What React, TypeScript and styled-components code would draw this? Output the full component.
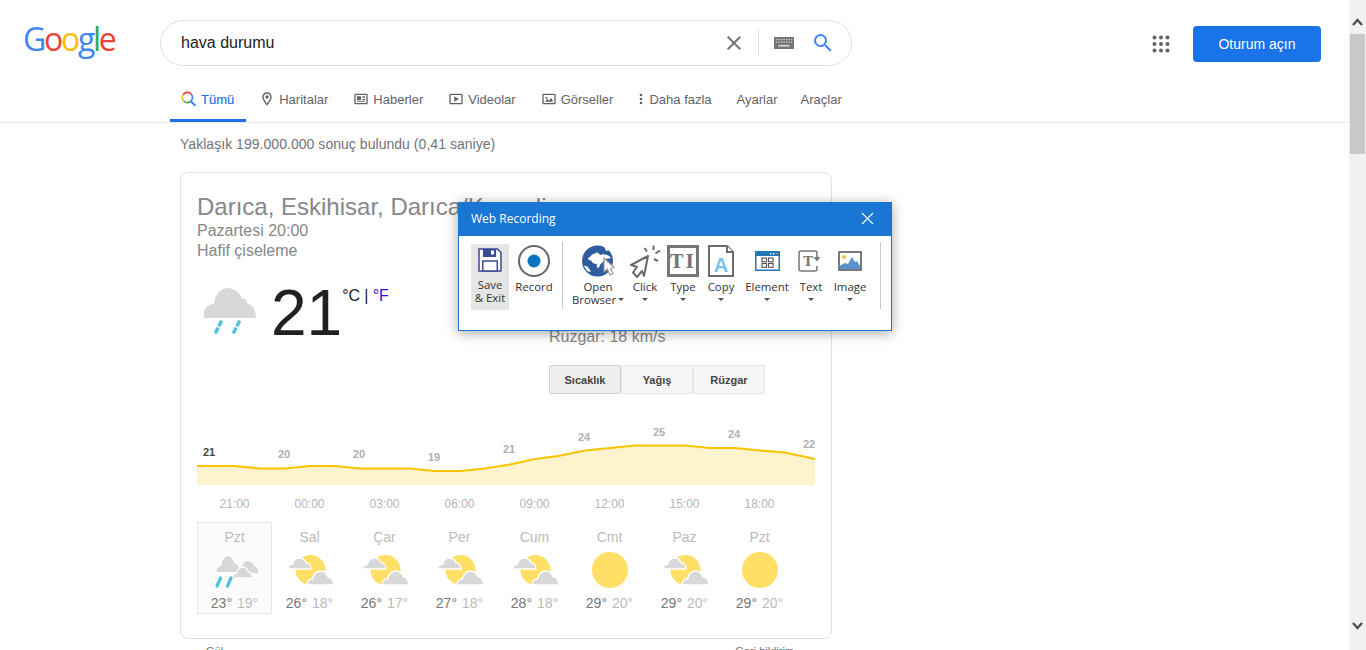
import React from "react";
import styled, { createGlobalStyle } from "styled-components";

const Global = createGlobalStyle`
  html, body { margin: 0; padding: 0; height: 650px; overflow: hidden; background: #fff; }
  body { font-family: "Liberation Sans", Arial, sans-serif; }
  * { box-sizing: border-box; }
`;

const Screen = styled.div`
  position: relative;
  display: flex;
  width: 1366px;
  height: 650px;
  overflow: hidden;
  background: #fff;
`;
const Main = styled.main`
  flex: 0 0 1349px;
  height: 650px;
  overflow: hidden;
`;
const Scrollbar = styled.aside`
  flex: 0 0 17px;
  height: 650px;
  background: #f1f1f1;
  display: flex;
  flex-direction: column;
  align-items: center;
  padding: 17px 1px 15px;
`;
const ScrollArrow = styled.div`
  height: 17px;
  width: 15px;
  display: flex;
  justify-content: center;
  align-items: ${(p: { $end?: boolean }) => (p.$end ? "center" : "flex-start")};
  color: #505050;
`;
const ScrollThumb = styled.div`
  width: 15px;
  height: 120px;
  background: #c8c8c8;
  margin-bottom: auto;
`;

const Header = styled.header`
  height: 86px;
  display: flex;
  align-items: flex-start;
  position: relative;
`;
const Logo = styled.div`
  width: 160px;
  padding: 16px 0 0 23px;
  font-family: "Open Sans", sans-serif;
  font-size: 32px;
  line-height: 46px;
  letter-spacing: -2.3px;
  font-weight: 400;
`;
const LogoLetter = styled.span<{ $c: string }>`
  color: ${(p) => p.$c};
`;
const SearchBox = styled.div`
  margin-top: 20px;
  width: 692px;
  height: 46px;
  border: 1px solid #dfe1e5;
  border-radius: 23px;
  display: flex;
  align-items: center;
  padding: 0 16px 0 20px;
`;
const SearchText = styled.div`
  flex: 1;
  font-size: 16px;
  color: #222;
`;
const SearchDivider = styled.div`
  width: 1px;
  height: 28px;
  background: #dfe1e5;
  margin: 0 13px 0 12px;
`;
const KeyboardWrap = styled.div`
  width: 24px;
  height: 24px;
  margin-right: 15px;
  display: flex;
  align-items: center;
  justify-content: center;
`;
const HeaderRight = styled.div`
  margin-left: auto;
  display: flex;
  align-items: center;
  gap: 20px;
  padding: 26px 28px 0 0;
`;
const SignIn = styled.button`
  width: 128px;
  height: 36px;
  border: 0;
  padding: 0 0 1px;
  border-radius: 4px;
  background: #1a73e8;
  color: #fff;
  font: 400 14px "Liberation Sans", Arial, sans-serif;
`;

const Nav = styled.nav`
  height: 37px;
  border-bottom: 1px solid #ebebeb;
  padding-left: 170px;
  display: flex;
`;
const Tab = styled.div<{ $active?: boolean; $pad?: number; $gap?: number }>`
  display: flex;
  align-items: center;
  gap: ${(p) => p.$gap ?? 4}px;
  height: 36px;
  padding: 0 12px 7px ${(p) => p.$pad ?? 12}px;
  margin-right: 1px;
  font-size: 13px;
  color: ${(p) => (p.$active ? "#1a73e8" : "#5f6368")};
  font-weight: 400;
  border-bottom: 3px solid ${(p) => (p.$active ? "#1a73e8" : "transparent")};
  -webkit-text-stroke: ${(p) => (p.$active ? "0.2px" : "0")};
`;

const Stats = styled.div`
  padding: 12px 0 0 180px;
  height: 49px;
  font-size: 14px;
  line-height: 18px;
  letter-spacing: 0.04px;
  color: #70757a;
`;

const Card = styled.section`
  margin-left: 180px;
  width: 652px;
  height: 467px;
  border: 1px solid #dfe1e5;
  border-radius: 8px;
  padding: 19px 16px 0;
  color: #878787;
`;
const Place = styled.div`
  font-size: 24px;
  line-height: 29px;
  white-space: nowrap;
`;
const Sub = styled.div`
  font-size: 16px;
  line-height: 20px;
`;
const Hero = styled.div`
  display: flex;
  margin-top: 24px;
`;
const HeroLeft = styled.div`
  width: 352px;
  padding-left: 4px;
  display: flex;
  align-items: flex-start;
`;
const BigTemp = styled.div`
  margin-left: 14px;
  font-size: 64px;
  line-height: 56px;
  color: #212121;
`;
const Units = styled.div`
  margin: 2px 0 0 0;
  font-size: 16px;
  line-height: 18px;
  letter-spacing: -0.1px;
  color: #212121;
`;
const UnitLink = styled.span`
  color: #2a1ad0;
`;
const HeroRight = styled.div`
  padding-top: 2px;
`;
const Tabs = styled.div`
  margin: 18px 0 0 352px;
  display: flex;
`;
const ChartTab = styled.div<{ $on?: boolean }>`
  width: 72px;
  height: 29px;
  border: 1px solid ${(p) => (p.$on ? "#d0d0d0" : "#e6e6e6")};
  border-radius: 2px;
  background: ${(p) => (p.$on ? "#eeeeee" : "#f6f6f6")};
  font-size: 11px;
  font-weight: 700;
  color: #444;
  display: flex;
  align-items: center;
  justify-content: center;
`;
const ChartSvg = styled.svg`
  display: block;
  margin-top: 34px;
  overflow: visible;
`;
const Hours = styled.div`
  margin-top: 6px;
  display: grid;
  grid-template-columns: repeat(8, 75px);
`;
const Hour = styled.div`
  text-align: center;
  font-size: 12px;
  line-height: 16px;
  color: #b5b5b5;
`;
const Days = styled.div`
  margin-top: 10px;
  display: grid;
  grid-template-columns: repeat(8, 75px);
`;
const Day = styled.div<{ $on?: boolean }>`
  height: 92px;
  border: 1px solid ${(p) => (p.$on ? "#e6e6e6" : "transparent")};
  background: ${(p) => (p.$on ? "#fbfbfb" : "transparent")};
  padding-top: 6px;
  display: flex;
  flex-direction: column;
  align-items: center;
`;
const DayName = styled.div`
  font-size: 14px;
  line-height: 16px;
  color: #bbb;
`;
const DayIcon = styled.div`
  height: 49px;
  display: flex;
  align-items: flex-end;
`;
const DayTemps = styled.div`
  display: flex;
  gap: 5px;
  font-size: 14px;
  line-height: 18px;
  color: #777;
`;
const Low = styled.span`
  color: #bbb;
`;
const CardFooter = styled.div`
  margin-left: 197px;
  width: 597px;
  display: flex;
  justify-content: space-between;
  padding: 6px 0 0 9px;
  font-size: 11px;
  color: #70757a;
`;

/* Recorder window */
const Recorder = styled.div`
  position: absolute;
  left: 458px;
  top: 202px;
  width: 434px;
  height: 129px;
  background: #fff;
  border: 1px solid #1976d2;
  box-shadow: 0 2px 12px rgba(0, 0, 0, 0.35);
  font-family: "Open Sans", "Noto Sans", sans-serif;
`;
const TitleBar = styled.div`
  height: 33px;
  background: #1976d2;
  color: #fff;
  font-size: 12px;
  display: flex;
  align-items: center;
  justify-content: space-between;
  padding: 0 17px 2px 12px;
`;
const Toolbar = styled.div`
  display: flex;
  align-items: flex-start;
  padding: 8px 0 0 12px;
`;
const ToolItem = styled.div<{ $w: number; $on?: boolean }>`
  flex: 0 0 ${(p) => p.$w}px;
  min-width: 0;
  height: 66px;
  background: ${(p) => (p.$on ? "#e6e6e6" : "transparent")};
  display: flex;
  flex-direction: column;
  align-items: center;
`;
const ToolIcon = styled.div<{ $top?: number }>`
  height: ${(p) => (p.$top ? 34 : 36)}px;
  padding: ${(p) => (p.$top ? `${p.$top}px 0 0` : "0 0 2px")};
  display: flex;
  align-items: ${(p) => (p.$top ? "flex-start" : "center")};
  justify-content: center;
`;
const ToolLabel = styled.div`
  font-size: 11.4px;
  line-height: 13px;
  color: #333;
  text-align: center;
  white-space: nowrap;
`;
const Caret = styled.span<{ $inline?: boolean }>`
  display: ${(p) => (p.$inline ? "inline-block" : "block")};
  width: 0;
  height: 0;
  border-left: 3.5px solid transparent;
  border-right: 3.5px solid transparent;
  border-top: 3.5px solid #555;
  margin: ${(p) => (p.$inline ? "0 0 2px 2px" : "5px 0 0")};
  vertical-align: middle;
`;
const ToolSep = styled.div<{ $l: number; $r: number }>`
  flex: 0 0 1px;
  height: 67px;
  margin: -2px ${(p) => p.$r}px 0 ${(p) => p.$l}px;
  background: #c8c8c8;
`;

/* Weather drawings */
const CLOUD = "M0 16C0 12.5 2.5 10 6 10C7 5 11 2 15 2C19 2 22 4.5 23.5 8C27.5 8 30 12 30 16Z";
const Cloud = ({ x, y, w, h, stroke }: { x: number; y: number; w: number; h: number; stroke?: boolean }) => (
  <g transform={`translate(${x} ${y}) scale(${w / 30} ${h / 14})  translate(0 -2)`}>
    <path d={CLOUD} fill="#d8d8d8" stroke={stroke ? "#fff" : "none"} strokeWidth={stroke ? 1.6 : 0} />
  </g>
);
const PartlySunny = () => (
  <svg width="48" height="48" viewBox="0 0 48 48" style={{ overflow: "visible" }}>
    <circle cx="24.5" cy="24" r="15" fill="#ffdf66" />
    <Cloud x={2} y={12} w={23} h={11} stroke />
    <Cloud x={21} y={25} w={27} h={14} stroke />
  </svg>
);
const FullSun = () => (
  <svg width="48" height="48" viewBox="0 0 48 48">
    <circle cx="24" cy="24" r="18" fill="#ffdf66" />
  </svg>
);
const RainyCloudy = () => (
  <svg width="48" height="48" viewBox="0 0 48 48" style={{ overflow: "visible" }}>
    <Cloud x={26.5} y={15} w={21} h={12} />
    <Cloud x={4.5} y={9} w={25} h={18} stroke />
    <Cloud x={21.5} y={21} w={20} h={11} stroke />
    <path d="M6 40l3.500-8M16.500 40l3.500-8" stroke="#4fc3dc" strokeWidth="3.200" strokeLinecap="round" />
  </svg>
);
const BigRain = () => (
  <svg width="56" height="54" viewBox="0 0 56 54">
    <path d="M3 33C1.500 25 6 19 13 19C14 9 20 3 27 3C34 3 39 8 41 14C44 12 46 16 47 19C51 19 55 25 55 33Z" fill="#d8d8d8" />
    <path d="M20 37l-1.500 3M16.500 44l-1.500 3M38 37l-1.500 3M34.500 44l-1.500 3" stroke="#4fc3dc" strokeWidth="3.600" strokeLinecap="round" />
  </svg>
);

/* Google icons */
const G = ({ s, d, c }: { s: number; d: string; c: string }) => (
  <svg width={s} height={s} viewBox="0 0 24 24" fill={c}><path d={d} /></svg>
);
const P_SEARCH = "M15.5 14h-.79l-.28-.27A6.471 6.471 0 0 0 16 9.5 6.5 6.5 0 1 0 9.5 16c1.61 0 3.09-.59 4.23-1.57l.27.28v.79l5 4.99L20.49 19l-4.99-5zm-6 0C7.01 14 5 11.99 5 9.5S7.01 5 9.5 5 14 7.01 14 9.5 11.99 14 9.5 14z";
const P_X = "M19 6.41L17.59 5 12 10.59 6.41 5 5 6.41 10.59 12 5 17.59 6.41 19 12 13.41 17.59 19 19 17.59 13.41 12z";
const P_PIN = "M12 2C8.13 2 5 5.13 5 9c0 5.25 7 13 7 13s7-7.75 7-13c0-3.87-3.13-7-7-7zM7 9c0-2.76 2.24-5 5-5s5 2.24 5 5c0 2.88-2.88 7.19-5 9.88C9.92 16.21 7 11.85 7 9zm5-2.500a2.500 2.500 0 1 0 0 5 2.500 2.500 0 0 0 0-5z";
const P_NEWS = "M20 4H4c-1.100 0-2 .9-2 2v12c0 1.100.9 2 2 2h16c1.100 0 2-.9 2-2V6c0-1.100-.9-2-2-2zm0 14H4V6h16v12zM6 8h6v6H6V8zm8 0h4v2h-4V8zm0 4h4v2h-4v-2zM6 15.500h12v1H6v-1z";
const P_VIDEO = "M20 4H4c-1.100 0-2 .9-2 2v12c0 1.100.9 2 2 2h16c1.100 0 2-.9 2-2V6c0-1.100-.9-2-2-2zm0 14H4V6h16v12zM9.500 8v8l7-4-7-4z";
const P_IMAGE = "M20 4H4c-1.100 0-2 .9-2 2v12c0 1.100.9 2 2 2h16c1.100 0 2-.9 2-2V6c0-1.100-.9-2-2-2zm0 14H4V6h16v12zM6 16l3.500-4.500 2.500 3 3.500-4.500L18 16H6zM8 8.500a1.500 1.500 0 1 1 0 3 1.500 1.500 0 0 1 0-3z";

const ColorSearch = () => (
  <svg width="16" height="16" viewBox="0 0 16 16" fill="none" strokeWidth="1.700">
    <path d="M10.200 3A5 5 0 0 0 2.200 3.800" stroke="#ea4335" />
    <path d="M2.200 3.800A5 5 0 0 0 2.800 10" stroke="#fbbc05" />
    <path d="M2.800 10A5 5 0 0 0 9.800 10.200" stroke="#34a853" />
    <path d="M9.800 10.200A5 5 0 0 0 10.200 3" stroke="#4285f4" />
    <path d="M9.800 10.200L14.500 14.800" stroke="#4285f4" strokeWidth="2" />
  </svg>
);
const Keyboard = () => (
  <svg width="20" height="12" viewBox="0 0 20 12">
    <rect width="20" height="12" fill="#777" />
    {[2, 4.5, 7, 9.5, 12, 14.5, 17].map((x) =>
      [2, 4.5].map((y) => <rect key={`${x}-${y}`} x={x} y={y} width="1.200" height="1.200" fill="#ddd" />)
    )}
    <rect x="4.500" y="8" width="11" height="1.500" fill="#ddd" />
  </svg>
);
const AppsIcon = () => (
  <svg width="24" height="24" viewBox="0 0 24 24" fill="#5f6368">
    {[5.5, 12, 18.5].map((y) => [5.5, 12, 18.5].map((x) => <circle key={`${x}${y}`} cx={x} cy={y} r="2" />))}
  </svg>
);
const Dots = () => (
  <svg width="4" height="14" viewBox="0 0 4 14" fill="#5f6368">
    <circle cx="2" cy="3" r="1.300" /><circle cx="2" cy="7" r="1.300" /><circle cx="2" cy="11" r="1.300" />
  </svg>
);

/* Recorder icons */
const Floppy = () => (
  <svg width="24" height="24" viewBox="0 0 24 24">
    <path d="M1 1H19.500L23 4.500V23H1Z" fill="#fff" stroke="#3b4a94" strokeWidth="1.500" />
    <path d="M5 1H18V9H5Z" fill="#3b4a94" />
    <rect x="13" y="2.500" width="3" height="4" fill="#fff" />
    <rect x="4.800" y="13" width="14.500" height="10" fill="#fff" stroke="#3b4a94" strokeWidth="1.500" />
  </svg>
);
const RecordIcon = () => (
  <svg width="32" height="32" viewBox="0 0 32 32">
    <circle cx="16" cy="16" r="15" fill="#fff" stroke="#666" strokeWidth="2" />
    <circle cx="16" cy="16" r="6.500" fill="#0a74c4" />
  </svg>
);
const Globe = () => (
  <svg width="33" height="32" viewBox="0 0 33 32">
    <circle cx="15.500" cy="16" r="15.500" fill="#2e5c9f" />
    <path d="M6 13C9 12 10 8 13 9C14 6 17 8 18 10C22 8 27 10 29 13C26 14 24 13 22 15C21 18 19 18 18 20C17 24 14 24 15 19C12 19 10 18 9 15C8 16 6 15 6 13Z" fill="#fff" />
    <path d="M22 1.500L28 5L24 6Z" fill="#fff" />
    <path d="M2 21C5 20 7 23 9 27L5 26Z" fill="#fff" />
    <path d="M22 13L22 27L25.500 24L28 30L31 28.500L28.500 23.500L32 22.500Z" fill="#fff" stroke="#9a9a9a" strokeWidth="1.200" strokeLinejoin="round" />
  </svg>
);
const ClickIcon = () => (
  <svg width="32" height="33" viewBox="0 0 32 33" fill="none" stroke="#6b6b6b" strokeWidth="2">
    <path d="M19 11L2 20L8 22L4 27.500L8 32L13 26L15 31Z" strokeLinejoin="round" />
    <path d="M15.500 3L18 6.500M24.500 .5V5M31 5.500L26.500 8.500M29 16L25 14" />
  </svg>
);
const TypeIcon = () => (
  <svg width="32" height="32" viewBox="0 0 32 32" style={{ flex: "none" }}>
    <rect x="1.500" y="1.500" width="29" height="29" fill="#fff" stroke="#777" strokeWidth="3" />
    <text x="16" y="22.500" textAnchor="middle" fontFamily="'DejaVu Serif', serif" fontWeight="700" fontSize="18" fill="#777" letterSpacing="2">TI</text>
  </svg>
);
const CopyIcon = () => (
  <svg width="26" height="32" viewBox="0 0 26 32">
    <path d="M1 1H19L25 7V31H1Z" fill="#fff" stroke="#6b6b6b" strokeWidth="2" />
    <path d="M19 1V7H25" fill="#fff" stroke="#6b6b6b" strokeWidth="2" />
    <text x="13" y="27" textAnchor="middle" fontFamily="'Liberation Sans', sans-serif" fontWeight="700" fontSize="20" fill="#7cc0e8">A</text>
  </svg>
);
const ElementIcon = () => (
  <svg width="25" height="21" viewBox="0 0 25 21">
    <rect width="25" height="20" fill="#1e78b8" />
    <rect x="1.500" y="5" width="22" height="13.500" fill="#fff" />
    <rect x="15" y="2" width="1.500" height="1.500" fill="#fff" />
    <rect x="18" y="2" width="1.500" height="1.500" fill="#fff" />
    <rect x="21" y="2" width="1.500" height="1.500" fill="#ee7766" />
    <g fill="none" stroke="#555" strokeWidth="1.100">
      <rect x="7" y="7" width="4.500" height="3.800" /><rect x="13.500" y="7" width="4.500" height="3.800" />
      <rect x="7" y="12.500" width="4.500" height="3.800" /><rect x="13.500" y="12.500" width="4.500" height="3.800" />
    </g>
  </svg>
);
const TextIcon = () => (
  <svg width="26" height="23" viewBox="0 0 26 23" fill="none">
    <path d="M17 1H3Q1 1 1 3V19Q1 21 3 21H17Q19 21 19 19V16" stroke="#777" strokeWidth="1.500" />
    <path d="M17 1Q19 1 19 3V9" stroke="#777" strokeWidth="1.500" />
    <path d="M15.500 7H22.500L19 11.500Z" fill="#777" />
    <text x="10" y="16" textAnchor="middle" fontFamily="'DejaVu Serif', serif" fontWeight="700" fontSize="13" fill="#777">T</text>
  </svg>
);
const ImageIcon = () => (
  <svg width="24" height="21" viewBox="0 0 24 21">
    <rect x="1" y="1" width="22" height="18" fill="#fff" stroke="#6b6b6b" strokeWidth="1.800" />
    <circle cx="6" cy="6" r="2" fill="#f5c842" />
    <path d="M2 18V14.500L7 12L10 13L14 6L17 11L19 10L22 15V18Z" fill="#5b93cc" />
  </svg>
);

const linePts = "197,466 235,466 260,468.500 285,468.500 310,466 335,466 360,468.500 410,468.500 435,471 460,471 485,468.500 510,464.500 535,459 558,456 585,450.500 610,448 635,445.500 685,445.500 710,448 735,448 760,450.500 785,452.500 815,459";
const labels: [number, number, string][] = [
  [209, 456, "21"], [284, 458, "20"], [359, 458, "20"], [434, 461, "19"], [509, 453, "21"],
  [584, 441, "24"], [659, 436, "25"], [734, 438, "24"], [809, 448, "22"],
];
const hours = ["21:00", "00:00", "03:00", "06:00", "09:00", "12:00", "15:00", "18:00"];
type Kind = "rain" | "part" | "sun";
const days: { n: string; k: Kind; h: number; l: number }[] = [
  { n: "Pzt", k: "rain", h: 23, l: 19 },
  { n: "Sal", k: "part", h: 26, l: 18 },
  { n: "Çar", k: "part", h: 26, l: 17 },
  { n: "Per", k: "part", h: 27, l: 18 },
  { n: "Cum", k: "part", h: 28, l: 18 },
  { n: "Cmt", k: "sun", h: 29, l: 20 },
  { n: "Paz", k: "part", h: 29, l: 20 },
  { n: "Pzt", k: "sun", h: 29, l: 20 },
];

export default function App() {
  return (
    <Screen>
      <Global />
      <Main>
        <Header>
          <Logo>
            <LogoLetter $c="#4285f4">G</LogoLetter>
            <LogoLetter $c="#ea4335">o</LogoLetter>
            <LogoLetter $c="#fbbc05">o</LogoLetter>
            <LogoLetter $c="#4285f4">g</LogoLetter>
            <LogoLetter $c="#34a853">l</LogoLetter>
            <LogoLetter $c="#ea4335">e</LogoLetter>
          </Logo>
          <SearchBox>
            <SearchText>hava durumu</SearchText>
            <G s={24} d={P_X} c="#70757a" />
            <SearchDivider />
            <KeyboardWrap><Keyboard /></KeyboardWrap>
            <G s={24} d={P_SEARCH} c="#4285f4" />
          </SearchBox>
          <HeaderRight>
            <AppsIcon />
            <SignIn>Oturum açın</SignIn>
          </HeaderRight>
        </Header>
        <Nav>
          <Tab $active $pad={11}><ColorSearch />Tümü</Tab>
          <Tab><G s={16} d={P_PIN} c="#5f6368" />Haritalar</Tab>
          <Tab><G s={16} d={P_NEWS} c="#5f6368" />Haberler</Tab>
          <Tab><G s={16} d={P_VIDEO} c="#5f6368" />Videolar</Tab>
          <Tab><G s={16} d={P_IMAGE} c="#5f6368" />Görseller</Tab>
          <Tab $pad={13} $gap={6}><Dots />Daha fazla</Tab>
          <Tab>Ayarlar</Tab>
          <Tab $pad={10}>Araçlar</Tab>
        </Nav>
        <Stats>Yaklaşık 199.000.000 sonuç bulundu (0,41 saniye)</Stats>
        <Card>
          <Place>Darıca, Eskihisar, Darıca/Kocaeli</Place>
          <Sub>Pazartesi 20:00</Sub>
          <Sub>Hafif çiseleme</Sub>
          <Hero>
            <HeroLeft>
              <BigRain />
              <BigTemp>21</BigTemp>
              <Units>°C | <UnitLink>°F</UnitLink></Units>
            </HeroLeft>
            <HeroRight>
              <Sub>Yağış: %10</Sub>
              <Sub>Nem: %88</Sub>
              <Sub>Rüzgar: 18 km/s</Sub>
            </HeroRight>
          </Hero>
          <Tabs>
            <ChartTab $on>Sıcaklık</ChartTab>
            <ChartTab>Yağış</ChartTab>
            <ChartTab>Rüzgar</ChartTab>
          </Tabs>
          <ChartSvg width="618" height="62" viewBox="197 428 618 62">
            <polygon points={`197,485 ${linePts} 815,485`} fill="#fdf3cc" />
            <polyline points={linePts} fill="none" stroke="#fcc400" strokeWidth="2.200" />
            {labels.map(([x, y, t], i) => (
              <text key={x} x={x} y={y} textAnchor="middle" fontFamily="'Liberation Sans', sans-serif" fontWeight="700" fontSize="11" fill={i === 0 ? "#444" : "#b0b0b0"}>{t}</text>
            ))}
          </ChartSvg>
          <Hours>{hours.map((h) => <Hour key={h}>{h}</Hour>)}</Hours>
          <Days>
            {days.map((d, i) => (
              <Day key={i} $on={i === 0}>
                <DayName>{d.n}</DayName>
                <DayIcon>{d.k === "rain" ? <RainyCloudy /> : d.k === "part" ? <PartlySunny /> : <FullSun />}</DayIcon>
                <DayTemps><span>{d.h}°</span><Low>{d.l}°</Low></DayTemps>
              </Day>
            ))}
          </Days>
        </Card>
        <CardFooter><span>Gül</span><span>Geri bildirim</span></CardFooter>
      </Main>
      <Scrollbar>
        <ScrollArrow>
          <svg width="11" height="9" viewBox="0 0 11 9" fill="none" stroke="currentColor" strokeWidth="2.400"><path d="M1 8L5.500 3L10 8" /></svg>
        </ScrollArrow>
        <ScrollThumb />
        <ScrollArrow $end>
          <svg width="11" height="9" viewBox="0 0 11 9" fill="none" stroke="currentColor" strokeWidth="2.400"><path d="M1 1L5.500 6L10 1" /></svg>
        </ScrollArrow>
      </Scrollbar>

      <Recorder>
        <TitleBar>
          <span>Web Recording</span>
          <svg width="13" height="13" viewBox="0 0 13 13" stroke="#fff" strokeWidth="1.100" fill="none"><path d="M1 1L12 12M12 1L1 12" /></svg>
        </TitleBar>
        <Toolbar>
          <ToolItem $w={38} $on>
            <ToolIcon $top={4}><Floppy /></ToolIcon>
            <ToolLabel>Save<br />&amp; Exit</ToolLabel>
          </ToolItem>
          <ToolItem $w={50}>
            <ToolIcon><RecordIcon /></ToolIcon>
            <ToolLabel>Record</ToolLabel>
          </ToolItem>
          <ToolSep $l={3} $r={11} />
          <ToolItem $w={48}>
            <ToolIcon><Globe /></ToolIcon>
            <ToolLabel>Open<br />Browser<Caret $inline /></ToolLabel>
          </ToolItem>
          <ToolItem $w={46}>
            <ToolIcon><ClickIcon /></ToolIcon>
            <ToolLabel>Click</ToolLabel><Caret />
          </ToolItem>
          <ToolItem $w={30}>
            <ToolIcon><TypeIcon /></ToolIcon>
            <ToolLabel>Type</ToolLabel><Caret />
          </ToolItem>
          <ToolItem $w={46}>
            <ToolIcon><CopyIcon /></ToolIcon>
            <ToolLabel>Copy</ToolLabel><Caret />
          </ToolItem>
          <ToolItem $w={46}>
            <ToolIcon><ElementIcon /></ToolIcon>
            <ToolLabel>Element</ToolLabel><Caret />
          </ToolItem>
          <ToolItem $w={42}>
            <ToolIcon><TextIcon /></ToolIcon>
            <ToolLabel>Text</ToolLabel><Caret />
          </ToolItem>
          <ToolItem $w={36}>
            <ToolIcon><ImageIcon /></ToolIcon>
            <ToolLabel>Image</ToolLabel><Caret />
          </ToolItem>
          <ToolSep $l={12} $r={0} />
        </Toolbar>
      </Recorder>
    </Screen>
  );
}
